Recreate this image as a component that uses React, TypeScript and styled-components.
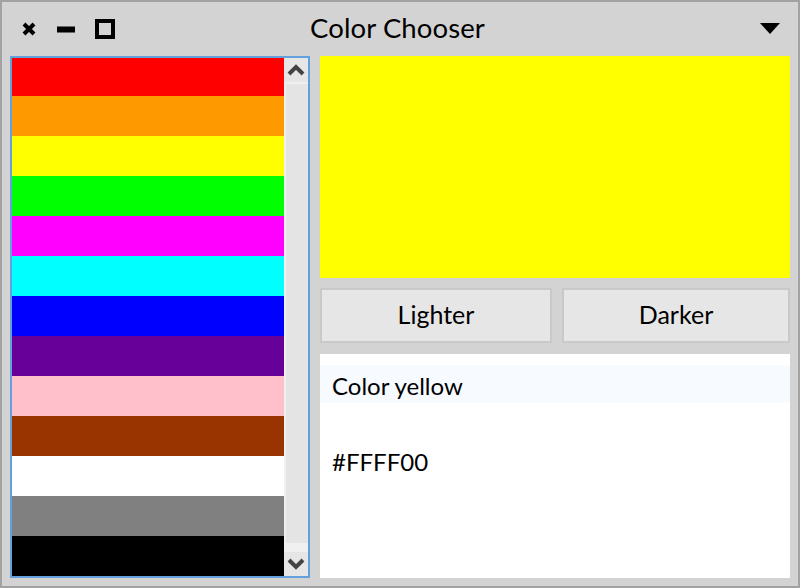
import React from "react";
import styled, { createGlobalStyle } from "styled-components";

const GlobalStyle = createGlobalStyle`
  html, body { margin: 0; padding: 0; background: #ffffff; }
  body { font-family: Lato, "Noto Sans", sans-serif; color: #000; }
  * { box-sizing: border-box; }
`;

const Window = styled.div`
  width: 800px;
  height: 588px;
  border: 2px solid #a2a2a2;
  background: #d3d3d3;
  display: flex;
  flex-direction: column;
`;

const TitleBar = styled.div`
  height: 54px;
  flex: none;
  display: grid;
  grid-template-columns: 1fr auto 1fr;
  align-items: center;
  padding: 0 18px 0 19px;
`;

const WindowButtons = styled.div`
  display: flex;
  align-items: center;
  justify-self: start;
`;

const IconBox = styled.span<{ $w: number; $ml: number }>`
  display: inline-flex;
  width: ${(p) => p.$w}px;
  margin-left: ${(p) => p.$ml}px;
  justify-content: center;
  align-items: center;
`;

const Title = styled.div`
  font-size: 27.5px;
  line-height: 1;
  padding-bottom: 2px;
  padding-right: 6px;
  letter-spacing: 0.1px;
`;

const Menu = styled.div`
  justify-self: end;
  display: flex;
  align-items: center;
`;

const Body = styled.div`
  flex: 1;
  display: flex;
  gap: 10px;
  padding: 0 8px 8px 8px;
  min-height: 0;
`;

const ListBox = styled.div`
  width: 300px;
  flex: none;
  border: 2px solid #63a1de;
  display: flex;
  background: #f0f0f0;
`;

const Viewport = styled.div`
  flex: 1;
  overflow: hidden;
`;

const Swatches = styled.div`
  margin-top: -2px;
  display: flex;
  flex-direction: column;
`;

const Swatch = styled.div<{ $c: string }>`
  height: 40px;
  flex: none;
  background: ${(p) => p.$c};
`;

const ScrollBar = styled.div`
  width: 24px;
  flex: none;
  display: flex;
  flex-direction: column;
  background: #f0f0f0;
`;

const ArrowButton = styled.div`
  height: 24px;
  flex: none;
  background: #e6e6e6;
  display: flex;
  align-items: center;
  justify-content: center;
`;

const Track = styled.div`
  flex: 1;
  padding: 2px 0 9px 2px;
  display: flex;
`;

const Thumb = styled.div`
  flex: 1;
  background: #e4e4e4;
`;

const RightColumn = styled.div`
  flex: 1;
  display: flex;
  flex-direction: column;
`;

const Preview = styled.div<{ $c: string }>`
  height: 222px;
  flex: none;
  background: ${(p) => p.$c};
`;

const ButtonRow = styled.div`
  margin-top: 10px;
  height: 55px;
  flex: none;
  display: grid;
  grid-template-columns: 232px 1fr;
  gap: 10px;
`;

const Button = styled.button`
  border: 2px solid #c9c9c9;
  background: #e6e6e6;
  font-family: Lato, "Noto Sans", sans-serif;
  font-size: 25px;
  color: #000;
  padding: 0 0 3px 0;
  margin: 0;
  cursor: pointer;
`;

const TextArea = styled.div`
  margin-top: 11px;
  flex: 1;
  background: #ffffff;
  padding-top: 11px;
  display: flex;
  flex-direction: column;
`;

const Line = styled.div<{ $current?: boolean }>`
  height: 38px;
  flex: none;
  padding: 3px 0 0 12px;
  font-size: 24px;
  line-height: 36px;
  background: ${(p) => (p.$current ? "#f7faff" : "transparent")};
  white-space: pre;
`;

const colors = [
  "#ff0000",
  "#ff9900",
  "#ffff00",
  "#00ff00",
  "#ff00ff",
  "#00ffff",
  "#0000ff",
  "#660099",
  "#ffc0cb",
  "#993300",
  "#ffffff",
  "#808080",
  "#000000",
];

const Chevron = ({ up }: { up?: boolean }) => (
  <svg width="18" height="12" viewBox="0 0 18 12">
    <path
      d={up ? "M2 10 L9 3 L16 10" : "M2 2 L9 9 L16 2"}
      fill="none"
      stroke="#444444"
      strokeWidth="4"
    />
  </svg>
);

export default function App() {
  return (
    <>
      <GlobalStyle />
      <Window>
        <TitleBar>
          <WindowButtons>
            <IconBox $w={16} $ml={0}>
              <svg width="14" height="14" viewBox="0 0 14 14">
                <path d="M2 2 L12 12 M12 2 L2 12" stroke="#000" strokeWidth="4" />
              </svg>
            </IconBox>
            <IconBox $w={18} $ml={20}>
              <svg width="18" height="7" viewBox="0 0 18 7">
                <rect x="0" y="0.5" width="18" height="6" fill="#000" />
              </svg>
            </IconBox>
            <IconBox $w={20} $ml={20}>
              <svg width="20" height="20" viewBox="0 0 20 20">
                <rect x="2" y="2" width="16" height="16" fill="none" stroke="#000" strokeWidth="4" />
              </svg>
            </IconBox>
          </WindowButtons>
          <Title>Color Chooser</Title>
          <Menu>
            <svg width="20" height="12" viewBox="0 0 20 12">
              <path d="M0 0 L20 0 L10 11 Z" fill="#000" />
            </svg>
          </Menu>
        </TitleBar>
        <Body>
          <ListBox>
            <Viewport>
              <Swatches>
                {colors.map((c) => (
                  <Swatch key={c} $c={c} />
                ))}
              </Swatches>
            </Viewport>
            <ScrollBar>
              <ArrowButton>
                <Chevron up />
              </ArrowButton>
              <Track>
                <Thumb />
              </Track>
              <ArrowButton>
                <Chevron />
              </ArrowButton>
            </ScrollBar>
          </ListBox>
          <RightColumn>
            <Preview $c="#ffff00" />
            <ButtonRow>
              <Button>Lighter</Button>
              <Button>Darker</Button>
            </ButtonRow>
            <TextArea>
              <Line $current>Color yellow</Line>
              <Line> </Line>
              <Line>#FFFF00</Line>
            </TextArea>
          </RightColumn>
        </Body>
      </Window>
    </>
  );
}
